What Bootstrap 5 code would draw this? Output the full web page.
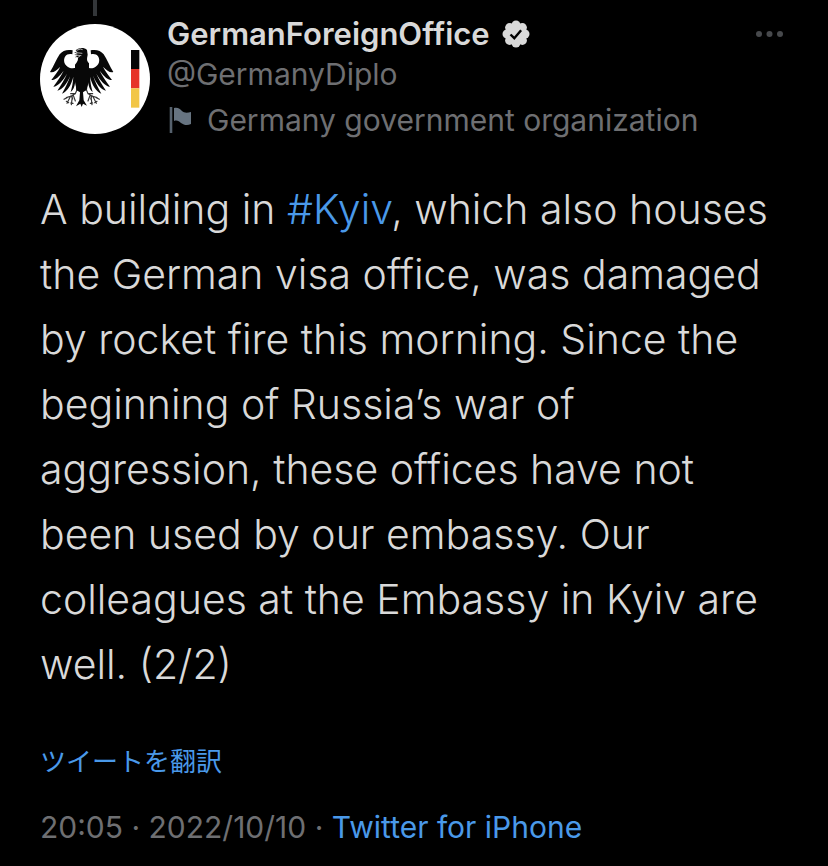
<!DOCTYPE html>
<html lang="en">
<head>
<meta charset="utf-8">
<meta name="viewport" content="width=device-width, initial-scale=1">
<title>GermanForeignOffice</title>
<link href="https://cdn.jsdelivr.net/npm/bootstrap@5.3.0/dist/css/bootstrap.min.css" rel="stylesheet">
<style>
body { background: #000; color: #d9d9d9; font-family: Inter, "Noto Sans CJK JP", sans-serif; }
a { color: #4a99e9; text-decoration: none; }
.post { padding: 0 40px 16px; }
.avatar-col { width: 110px; }
.thread-line { width: 4px; height: 16px; background: #333639; margin-bottom: 8px; }
.who { padding-top: 14px; margin-left: 17px; }
.display-name { font-size: 31px; line-height: 40px; font-weight: 600; gap: 12px; }
.meta-text { font-size: 30px; line-height: 40px; color: #6e6f72; }
.org { margin-top: 6px; }
.more { margin-top: 28px; line-height: 0; }
.post-text { font-size: 41px; line-height: 65px; font-weight: 300; margin: 37px 0 0; }
.translate { font-size: 26px; line-height: 40px; font-weight: 400; margin-top: 45px; }
.stamp { margin-top: 25px; }
</style>
</head>
<body>
<article class="post">
  <header class="d-flex align-items-start">
    <div class="avatar-col flex-shrink-0 d-flex flex-column align-items-center">
      <div class="thread-line"></div>
      <svg width="110" height="110" viewBox="30 72 330 330" role="img" aria-label="Federal eagle">
        <circle cx="195" cy="237" r="165" fill="#fff"/>
        <defs>
          <g id="wing">
            <path d="M128 151C112 148 98 151 89 163C79 177 71 199 60 216C70 219 79 212 91 200C84 214 74 226 64 240C76 240 88 230 101 212C93 229 82 243 70 260C84 259 99 242 111 221C104 239 93 254 82 272C98 268 111 250 121 227C115 246 106 262 96 281C112 274 124 255 130 230C129 248 126 262 122 276C132 268 135 254 136 242L139 270L149 272L151 190C143 203 131 208 118 203C103 197 98 181 106 169C110 163 118 161 127 163Z"/>
            <path d="M143 264L136 281L124 288L128 297M136 281L122 281M124 288L109 293M122 288L111 310M127 290L124 314M130 286L136 303M111 293L102 298M109 304L116 308M122 309L129 310" fill="none" stroke="#333" stroke-width="3.500" stroke-linecap="round"/>
          </g>
        </defs>
        <g fill="#080808">
          <use href="#wing"/>
          <use href="#wing" transform="translate(310 0) scale(-1 1)"/>
          <path d="M137 152C142 143 163 141 171 150L173 164C171 176 169 181 177 190L177 245L168 271L159 277L161 301L171 317L159 311L155 321L151 311L138 319L148 301L150 277L140 271L135 244L135 194C143 185 146 178 143 171L134 172L143 167L133 164L143 162L132 157L143 157Z"/>
          <path d="M140 151L151 147L158 149M138 158L157 160M137 165L154 167M144 172L150 168" fill="none" stroke="#fff" stroke-width="2"/>
        </g>
        <path d="M303 150h25v57h-25z" fill="#050505"/>
        <path d="M303 207h25v58h-25z" fill="#e63329"/>
        <path d="M303 265h25v58h-25z" fill="#f2c646"/>
      </svg>
    </div>
    <div class="who flex-grow-1">
      <div class="display-name d-flex align-items-center">
        <span>GermanForeignOffice</span>
        <svg width="28" height="28" viewBox="0 0 28 28" role="img" aria-label="Verified">
          <g fill="#d9d9d9"><circle cx="14" cy="14" r="10"/><circle cx="14" cy="5" r="4.500"/><circle cx="20.400" cy="7.600" r="4.500"/><circle cx="23" cy="14" r="4.500"/><circle cx="20.400" cy="20.400" r="4.500"/><circle cx="14" cy="23" r="4.500"/><circle cx="7.600" cy="20.400" r="4.500"/><circle cx="5" cy="14" r="4.500"/><circle cx="7.600" cy="7.600" r="4.500"/></g>
          <path d="M8.500 14.500l3.800 3.700 6.800-8" fill="none" stroke="#000" stroke-width="2.400"/>
        </svg>
      </div>
      <div class="meta-text">@GermanyDiplo</div>
      <div class="meta-text org d-flex align-items-center">
        <svg class="me-3" width="24" height="28" viewBox="0 0 24 28" aria-hidden="true">
          <path d="M4 1v26" stroke="#56616d" stroke-width="2.600"/>
          <path d="M7 2C11 1 13 3 15 5C17 7 20 7 24 6V18C20 20 17 19 14 17C12 15 10 14 7 15Z" fill="#677481"/>
        </svg>
        <span>Germany government organization</span>
      </div>
    </div>
    <button class="more btn p-0 border-0" type="button" aria-label="More">
      <svg width="32" height="12" viewBox="0 0 32 12" fill="#47494c"><circle cx="3" cy="6" r="3"/><circle cx="13.500" cy="6" r="3"/><circle cx="24" cy="6" r="3"/></svg>
    </button>
  </header>
  <p class="post-text">A building in <a href="#kyiv">#Kyiv</a>, which also houses the German visa office, was damaged by rocket fire this morning. Since the beginning of Russia’s war of aggression, these offices have not been used by our embassy. Our colleagues at the Embassy in Kyiv are well. (2/2)</p>
  <div class="translate"><a href="#translate" lang="ja">ツイートを翻訳</a></div>
  <div class="meta-text stamp">20:05 · 2022/10/10 · <a href="#source">Twitter for iPhone</a></div>
</article>
<script src="https://cdn.jsdelivr.net/npm/bootstrap@5.3.0/dist/js/bootstrap.bundle.min.js"></script>
</body>
</html>
